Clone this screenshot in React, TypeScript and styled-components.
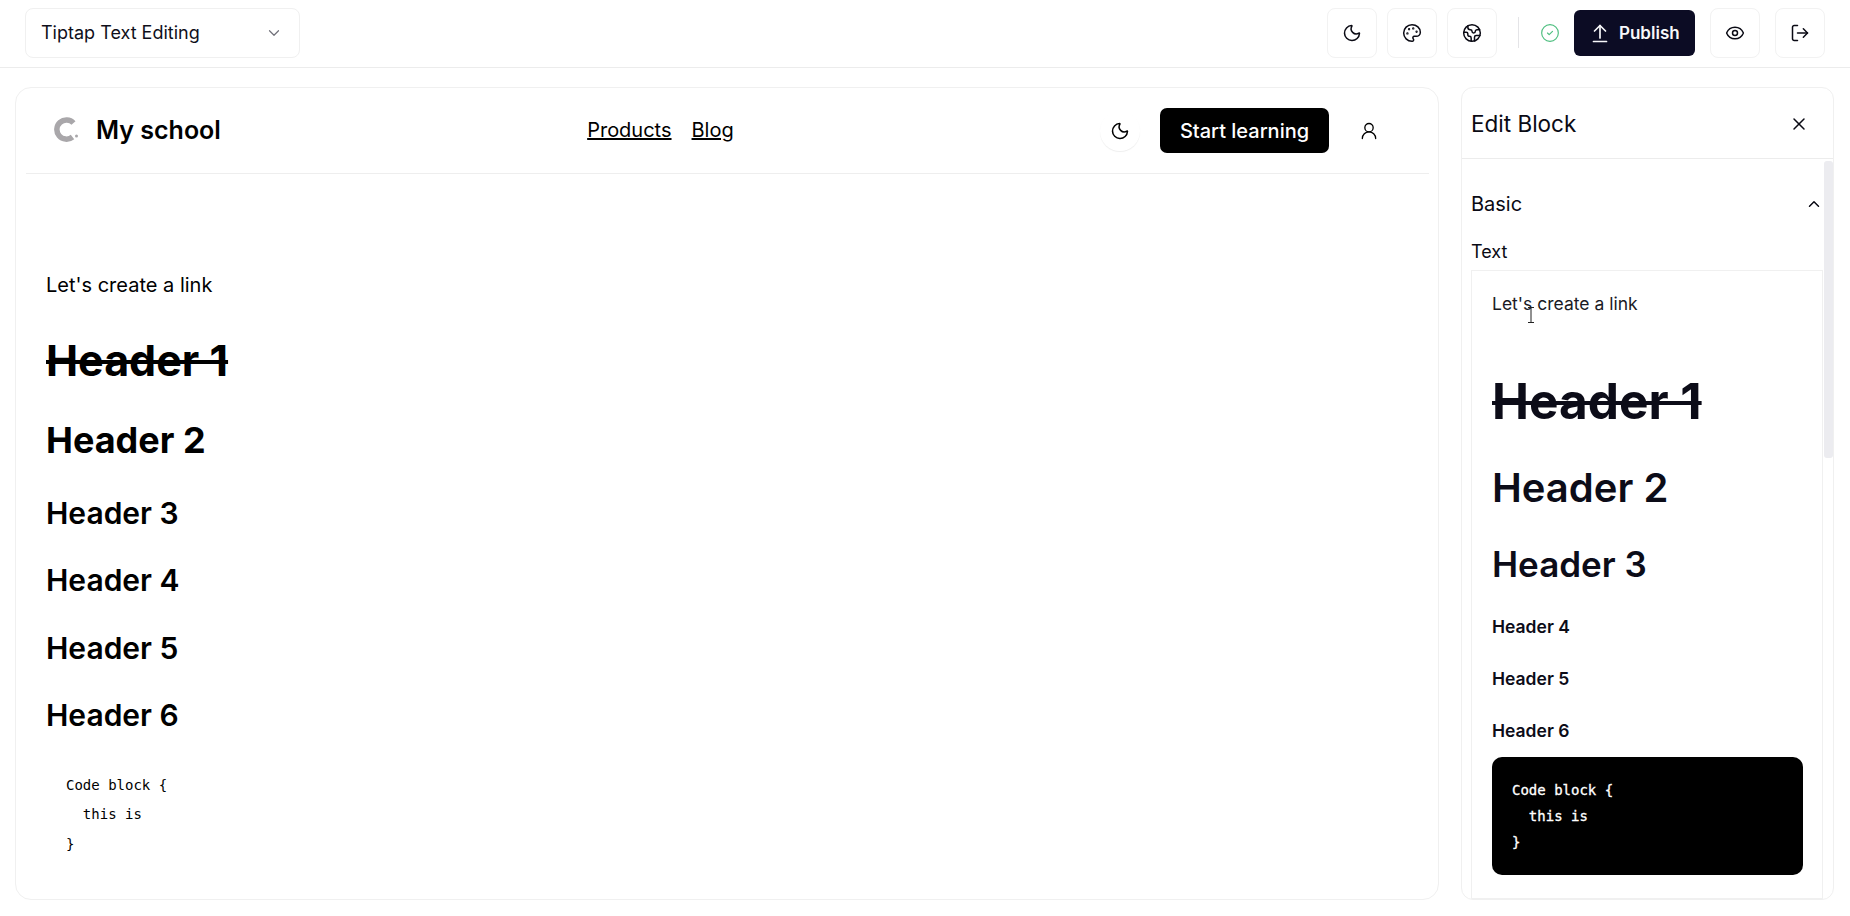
import React from "react";
import styled, { createGlobalStyle } from "styled-components";
import { ChevronDown, ChevronUp, CircleCheck, Earth, Eye, LogOut, Moon, Palette, UserRound, X } from "lucide-react";

const GlobalStyle = createGlobalStyle`
  html, body {
    margin: 0;
    height: 100%;
    overflow: hidden;
    background: #fff;
    font-family: Inter, "Liberation Sans", sans-serif;
    color: #0a0a14;
  }
  h1, h2, h3, h4, h5, h6, p, pre { margin: 0; }
`;

const Page = styled.div`
  display: flex;
  flex-direction: column;
  height: 916px;
`;
const TopBar = styled.header`
  display: flex;
  align-items: center;
  flex: none;
  box-sizing: border-box;
  height: 68px;
  padding: 0 25px 2px 25px;
  border-bottom: 1px solid #ececec;
`;
const SelectBox = styled.div`
  display: flex;
  align-items: center;
  justify-content: space-between;
  width: 275px;
  height: 50px;
  box-sizing: border-box;
  padding: 0 16px 0 15px;
  border: 1px solid #f0f0f0;
  border-radius: 8px;
  font-size: 18px;
  color: #0f0f1a;
  svg { color: #71717a; }
`;
const Actions = styled.div`
  display: flex;
  align-items: center;
  margin-left: auto;
`;
const IconButton = styled.button<{ $gap?: number }>`
  display: flex;
  align-items: center;
  justify-content: center;
  width: 50px;
  height: 50px;
  padding: 0;
  margin-left: ${(p) => p.$gap ?? 10}px;
  background: #fff;
  color: #0a0a14;
  border: 1px solid #f2f2f2;
  border-radius: 8px;
`;
const Divider = styled.span`
  width: 1px;
  height: 31px;
  margin: 0 21px;
  background: #e4e4e7;
`;
const PublishButton = styled.button`
  display: flex;
  align-items: center;
  gap: 9px;
  height: 46px;
  width: 121px;
  box-sizing: border-box;
  padding: 0 0 0 16px;
  margin: 0 5px 0 14px;
  font: 600 17px Inter, sans-serif;
  color: #f8f8fa;
  background: #0c0c24;
  border: 0;
  border-radius: 6px;
`;
const Workspace = styled.main`
  display: flex;
  flex: 1;
  min-height: 0;
  gap: 22px;
  padding: 19px 16px 16px 15px;
`;
const PreviewPanel = styled.section`
  width: 1424px;
  flex: none;
  box-sizing: border-box;
  padding: 0 9px 0 10px;
  border: 1px solid #f0f0f0;
  border-radius: 16px;
  overflow: hidden;
`;
const SiteHeader = styled.div`
  display: flex;
  align-items: center;
  justify-content: space-between;
  height: 85px;
  padding: 0 50px 0 27px;
  border-bottom: 1px solid #eeeeee;
`;
const Brand = styled.div`
  display: flex;
  align-items: center;
  gap: 17px;
  margin-bottom: 2px;
  font-size: 25px;
  font-weight: 600;
  color: #000;
`;
const Nav = styled.nav`
  display: flex;
  gap: 20px;
  margin-bottom: 2px;
  font-size: 20px;
  color: #000;
  a { color: inherit; text-decoration: underline; }
`;
const SiteActions = styled.div`
  display: flex;
  align-items: center;
`;
const RoundButton = styled.span`
  display: flex;
  align-items: center;
  justify-content: center;
  width: 40px;
  height: 40px;
  border-radius: 50%;
  box-shadow: 0 1px 1px #eeeeee;
  color: #000;
`;
const LearnButton = styled.span`
  display: flex;
  align-items: center;
  justify-content: center;
  width: 169px;
  height: 45px;
  margin: 0 30px 0 20px;
  font-size: 20px;
  font-weight: 500;
  color: #fff;
  background: #000;
  border-radius: 7px;
`;
const PreviewBody = styled.div`
  padding: 99px 20px 0 20px;
  color: #000;
`;
const BodyText = styled.p`
  font-size: 20px;
  line-height: 24px;
  margin-bottom: 37px;
`;
const PreviewH1 = styled.h1`
  font-size: 43px;
  font-weight: 700;
  line-height: 52px;
  text-decoration: line-through;
  margin-bottom: 32px;
`;
const PreviewH2 = styled.h2`
  font-size: 36px;
  font-weight: 700;
  line-height: 44px;
  margin-bottom: 32.5px;
`;
const PreviewHeading = styled.h3`
  font-size: 30px;
  font-weight: 600;
  line-height: 36px;
  margin-bottom: 31.5px;
`;
const PreviewCode = styled.pre`
  padding: 6px 20px;
  font: 14px/29.5px "DejaVu Sans Mono", monospace;
`;
const EditPanel = styled.aside`
  position: relative;
  flex: 1;
  display: flex;
  flex-direction: column;
  border: 1px solid #f0f0f0;
  border-radius: 12px;
  overflow: hidden;
`;
const EditHeader = styled.div`
  display: flex;
  align-items: center;
  justify-content: space-between;
  flex: none;
  height: 71px;
  padding: 1px 24px 0 9px;
  box-sizing: border-box;
  border-bottom: 1px solid #ececec;
  font-size: 22.5px;
  font-weight: 400;
`;
const EditScroll = styled.div`
  flex: 1;
  min-height: 0;
  display: flex;
`;
const EditContent = styled.div`
  flex: 1;
  min-width: 0;
  display: flex;
  flex-direction: column;
  padding: 0 0 0 9px;
`;
const SectionTitle = styled.div`
  display: flex;
  align-items: center;
  justify-content: space-between;
  height: 30px;
  margin-top: 30px;
  font-size: 20px;
`;
const FieldLabel = styled.div`
  margin-top: 22px;
  font-size: 18px;
  line-height: 22px;
`;
const Editor = styled.div`
  position: relative;
  flex: 1;
  margin: 7px 0 0 0;
  padding: 19px 19px 0 20px;
  border: 1px solid #f0f0f0;
  color: #0c0c18;
`;
const EditorText = styled.p`
  font-size: 17.5px;
  line-height: 28px;
  margin-bottom: 54px;
  color: #1a1a24;
`;
const EditorH1 = styled.h1`
  font-size: 49.5px;
  font-weight: 700;
  line-height: 58px;
  text-decoration: line-through;
  margin-bottom: 34px;
`;
const EditorH2 = styled.h2`
  font-size: 40px;
  font-weight: 600;
  line-height: 48px;
  margin-bottom: 31px;
`;
const EditorH3 = styled.h3`
  font-size: 35px;
  font-weight: 600;
  line-height: 42px;
  margin-bottom: 28px;
`;
const EditorSmallHeading = styled.h4`
  font-size: 17.5px;
  font-weight: 600;
  line-height: 28px;
  margin-bottom: 24px;
`;
const CodeBlock = styled.pre`
  margin-top: -12px;
  height: 118px;
  box-sizing: border-box;
  padding: 20px 20px;
  font: 14px/26px "DejaVu Sans Mono", monospace;
  -webkit-text-stroke: 0.3px #fff;
  color: #fff;
  background: #000;
  border-radius: 10px;
`;
const ScrollTrack = styled.div`
  flex: none;
  width: 9px;
  margin-left: 1px;
  padding-top: 2px;
`;
const ScrollThumb = styled.div`
  height: 297px;
  background: #ececf0;
  border-radius: 3px;
`;
const TextCursor = styled.svg`
  position: absolute;
  left: 55px;
  top: 36px;
`;

const UploadGlyph = () => (
  <svg width="20" height="20" viewBox="0 0 20 20" fill="none" stroke="currentColor" strokeWidth="1.7" strokeLinecap="round" strokeLinejoin="round">
    <path d="M10 15V2.5" />
    <path d="M4.5 8 10 2.5 15.500 8" />
    <path d="M3.500 18.500h13" />
  </svg>
);

const LogoMark = () => (
  <svg width="26" height="26" viewBox="0 0 26 26" fill="none" stroke="#a9a7aa" strokeWidth="5.500">
    <path d="M20.500 6A9.600 9.600 0 1 0 19.500 20" />
    <circle cx="23.500" cy="19" r="1.500" fill="#a9a7aa" stroke="none" />
  </svg>
);

const headings = ["Header 3", "Header 4", "Header 5", "Header 6"];
const editorHeadings = ["Header 4", "Header 5", "Header 6"];
const codeText = "Code block {\n  this is\n}";

export default function App() {
  return (
    <Page>
      <GlobalStyle />
      <TopBar>
        <SelectBox>
          Tiptap Text Editing
          <ChevronDown size={18} strokeWidth={1.6} />
        </SelectBox>
        <Actions>
          <IconButton><Moon size={20} strokeWidth={1.8} /></IconButton>
          <IconButton><Palette size={20} strokeWidth={1.8} /></IconButton>
          <IconButton><Earth size={20} strokeWidth={1.8} /></IconButton>
          <Divider />
          <CircleCheck size={20} strokeWidth={1.4} color="#4fbf80" />
          <PublishButton>
            <UploadGlyph />
            Publish
          </PublishButton>
          <IconButton><Eye size={20} strokeWidth={1.8} /></IconButton>
          <IconButton $gap={15}><LogOut size={20} strokeWidth={1.8} /></IconButton>
        </Actions>
      </TopBar>
      <Workspace>
        <PreviewPanel>
          <SiteHeader>
            <Brand>
              <LogoMark />
              My school
            </Brand>
            <Nav>
              <a>Products</a>
              <a>Blog</a>
            </Nav>
            <SiteActions>
              <RoundButton><Moon size={20} strokeWidth={1.8} /></RoundButton>
              <LearnButton>Start learning</LearnButton>
              <UserRound size={20} strokeWidth={1.6} color="#000" />
            </SiteActions>
          </SiteHeader>
          <PreviewBody>
            <BodyText>Let's create a link</BodyText>
            <PreviewH1>Header 1</PreviewH1>
            <PreviewH2>Header 2</PreviewH2>
            {headings.map((h) => (
              <PreviewHeading key={h}>{h}</PreviewHeading>
            ))}
            <PreviewCode>{codeText}</PreviewCode>
          </PreviewBody>
        </PreviewPanel>
        <EditPanel>
          <EditHeader>
            Edit Block
            <X size={20} strokeWidth={1.8} />
          </EditHeader>
          <EditScroll>
            <EditContent>
              <SectionTitle>
                Basic
                <ChevronUp size={18} strokeWidth={2} />
              </SectionTitle>
              <FieldLabel>Text</FieldLabel>
              <Editor>
                <EditorText>Let's create a link</EditorText>
                <EditorH1>Header 1</EditorH1>
                <EditorH2>Header 2</EditorH2>
                <EditorH3>Header 3</EditorH3>
                {editorHeadings.map((h) => (
                  <EditorSmallHeading key={h}>{h}</EditorSmallHeading>
                ))}
                <CodeBlock>{codeText}</CodeBlock>
                <TextCursor width="8" height="16" viewBox="0 0 8 16" fill="none" stroke="#222" strokeWidth="1">
                  <path d="M1 .5h6M4 .5v15M1 15.500h6" />
                </TextCursor>
              </Editor>
            </EditContent>
            <ScrollTrack>
              <ScrollThumb />
            </ScrollTrack>
          </EditScroll>
        </EditPanel>
      </Workspace>
    </Page>
  );
}
